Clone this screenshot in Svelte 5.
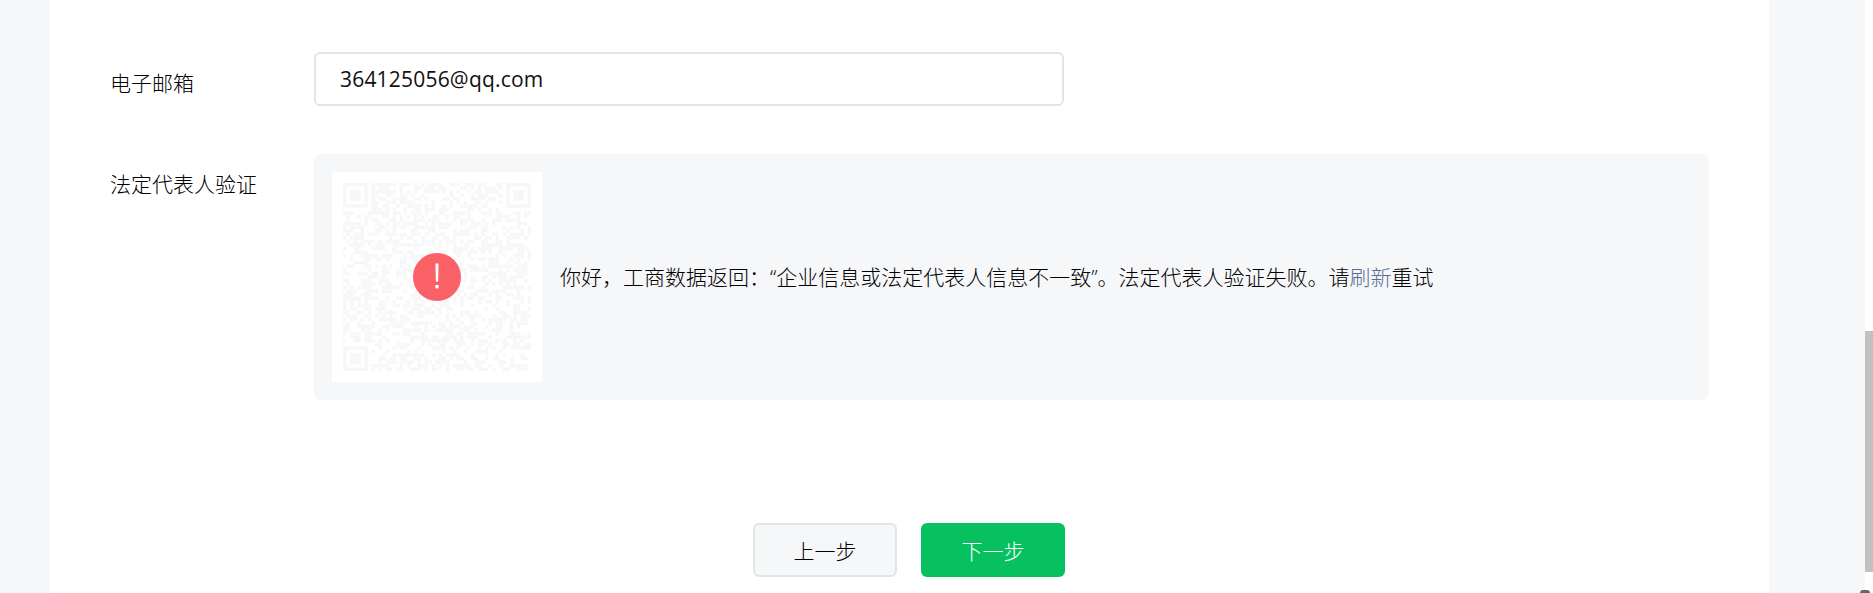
<script>
  // pseudo random modules for the faded qr code
  const SIZE = 53;
  let seed = 364125056;
  const rand = () => {
    seed = (seed * 1664525 + 1013904223) % 4294967296;
    return seed / 4294967296;
  };

  const inFinder = (x, y) =>
    (x < 8 && y < 8) || (x >= SIZE - 8 && y < 8) || (x < 8 && y >= SIZE - 8);

  const modules = [];
  for (let y = 0; y < SIZE; y++) {
    for (let x = 0; x < SIZE; x++) {
      if (!inFinder(x, y) && rand() > 0.5) modules.push({ x, y });
    }
  }

  const finders = [[0, 0], [SIZE - 7, 0], [0, SIZE - 7]];
</script>

<div class="page">
  <main class="card">
    <div class="row">
      <span class="label email-label">电子邮箱</span>
      <input class="email" type="text" value="364125056@qq.com" />
    </div>

    <div class="row verify-row">
      <span class="label verify-label">法定代表人验证</span>
      <div class="verify">
        <div class="qr">
          <svg class="qr-code" viewBox="0 0 {SIZE} {SIZE}">
            {#each modules as m}
              <rect x={m.x} y={m.y} width="1" height="1" fill="#f7f7f7" />
            {/each}
            {#each finders as [fx, fy]}
              <path
                fill="#f7f7f7"
                fill-rule="evenodd"
                d="M{fx} {fy}h7v7h-7z M{fx + 1} {fy + 1}v5h5v-5z M{fx + 2} {fy + 2}h3v3h-3z"
              />
            {/each}
          </svg>
          <svg class="alert" viewBox="0 0 48 48">
            <circle cx="24" cy="24" r="24" fill="#fa6166" />
            <path d="M22.4 10.5h3.2l-.5 18h-2.2z" fill="#fff" />
            <rect x="22.4" y="32" width="3.2" height="3.4" fill="#fff" />
          </svg>
        </div>
        <p class="message">
          你好&#xFF0C;工商数据返回&#xFF1A;&#x201C;企业信息或法定代表人信息不一致&#x201D;。法定代表人验证失败。请<span class="link">刷新</span>重试
        </p>
      </div>
    </div>

    <div class="actions">
      <button class="btn prev">上一步</button>
      <button class="btn next">下一步</button>
    </div>
  </main>

  <div class="scrollbar"><div class="thumb"></div></div>
  <span class="cursor-tip"></span>
</div>

<style>
  :global(body) {
    margin: 0;
    background: #f6f7f9;
  }
  .page {
    position: relative;
    height: 593px;
    overflow: hidden;
    display: flex;
    padding-left: 50px;
    font-family: "Open Sans", "Noto Sans CJK SC", sans-serif;
    font-size: 21px;
    font-weight: 300;
    color: #000;
  }
  .card {
    width: 1719px;
    box-sizing: border-box;
    flex: none;
    background: #fff;
    padding: 52px 60px 0;
  }
  .row {
    display: flex;
    align-items: center;
  }
  .verify-row {
    align-items: flex-start;
    margin-top: 48px;
  }
  .label {
    width: 204px;
    flex: none;
    line-height: 30px;
  }
  .email-label {
    padding-top: 7px;
  }
  .verify-label {
    padding-top: 15px;
  }
  .email {
    width: 750px;
    height: 54px;
    box-sizing: border-box;
    border: 2px solid #e3e4e6;
    border-radius: 6px;
    padding: 0 24px;
    font: inherit;
    font-weight: 400;
    letter-spacing: 0.2px;
    color: #111;
    outline: none;
    background: #fff;
  }
  .verify {
    width: 1395px;
    height: 246px;
    box-sizing: border-box;
    padding: 18px;
    border-radius: 8px;
    background: #f6f7f9;
    display: flex;
    align-items: center;
    gap: 18px;
  }
  .qr {
    position: relative;
    width: 210px;
    height: 210px;
    flex: none;
    background: #fff;
    padding: 11px;
    box-sizing: border-box;
  }
  .qr-code {
    display: block;
    width: 188px;
    height: 188px;
    filter: blur(0.4px);
  }
  .alert {
    position: absolute;
    left: 81px;
    top: 81px;
    width: 48px;
    height: 48px;
  }
  .message {
    margin: 0;
    line-height: 30px;
  }
  .link {
    color: #576b95;
  }
  .actions {
    display: flex;
    justify-content: center;
    gap: 24px;
    margin: 123px 0 0 -1px;
  }
  .btn {
    width: 144px;
    height: 54px;
    box-sizing: border-box;
    border-radius: 6px;
    font: inherit;
    padding: 0;
  }
  .prev {
    border: 2px solid #e3e4e6;
    background: #f6f7f9;
    color: #000;
  }
  .next {
    border: none;
    background: #07c160;
    color: #fff;
  }
  .scrollbar {
    margin-left: auto;
    width: 8px;
    flex: none;
    background: #fff;
    padding-top: 331px;
  }
  .thumb {
    height: 241px;
    background: #c1c1c1;
  }
  .cursor-tip {
    position: absolute;
    left: 1860px;
    top: 590px;
    width: 10px;
    height: 3px;
    border-radius: 3px 3px 0 0;
    background: #666;
  }
</style>
